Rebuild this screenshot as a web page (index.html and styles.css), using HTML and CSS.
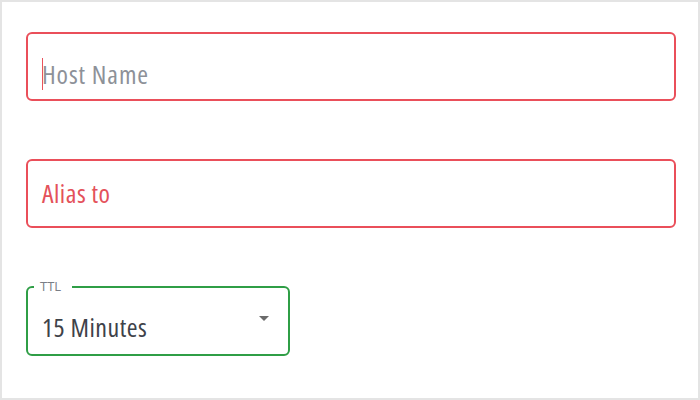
FILE: index.html
```html
<!DOCTYPE html>
<html>
<head>
<meta charset="utf-8">
<link rel="stylesheet" href="styles.css">
</head>
<body>
<div class="frame">
  <div class="field field-error field-host">
    <span class="caret"></span><span class="placeholder">Host Name</span>
  </div>
  <div class="field field-error field-alias">
    <span class="alias-label">Alias to</span>
  </div>
  <div class="field field-select">
    <span class="legend">TTL</span>
    <span class="value">15 Minutes</span>
    <span class="arrow"></span>
  </div>
</div>
</body>
</html>
```
FILE: styles.css
```css
html, body {
  margin: 0;
  padding: 0;
  background: #fff;
}
.frame {
  width: 700px;
  height: 400px;
  box-sizing: border-box;
  border: 2px solid #e4e4e4;
  padding: 30px 22px 0 24px;
  display: flex;
  flex-direction: column;
  gap: 59px;
  font-family: "Open Sans", "Noto Sans", sans-serif;
  font-stretch: semi-condensed;
  letter-spacing: 0.5px;
}
.field {
  position: relative;
  box-sizing: border-box;
  border: 2px solid #ea4f5a;
  border-radius: 6px;
  height: 69px;
  display: flex;
  align-items: center;
  padding-left: 14px;
}
.field-host {
  align-items: flex-start;
  padding-top: 24px;
}
.caret {
  display: block;
  width: 1px;
  height: 32px;
  background: #e9525c;
  margin-right: -1px;
}
.placeholder {
  font-size: 26px;
  line-height: 32px;
  letter-spacing: 0.9px;
  color: #8d9198;
}
.field-alias {
  margin-top: -1px;
  padding-bottom: 2px;
}
.alias-label {
  font-size: 26px;
  line-height: 32px;
  color: #e4515a;
}
.field-select {
  width: 264px;
  height: 70px;
  border-color: #2f9e46;
  padding-top: 11px;
  margin-top: -1px;
}
.legend {
  position: absolute;
  top: -10px;
  left: 6px;
  background: #fff;
  padding: 0 11px 0 6px;
  font-size: 13px;
  font-stretch: normal;
  letter-spacing: 0;
  line-height: 16px;
  color: #7a7e86;
}
.value {
  font-size: 26px;
  line-height: 32px;
  color: #3e4249;
}
.arrow {
  position: absolute;
  right: 19px;
  top: 28px;
  width: 0;
  height: 0;
  border-left: 5px solid transparent;
  border-right: 5px solid transparent;
  border-top: 5px solid #6b6b6b;
}
```
